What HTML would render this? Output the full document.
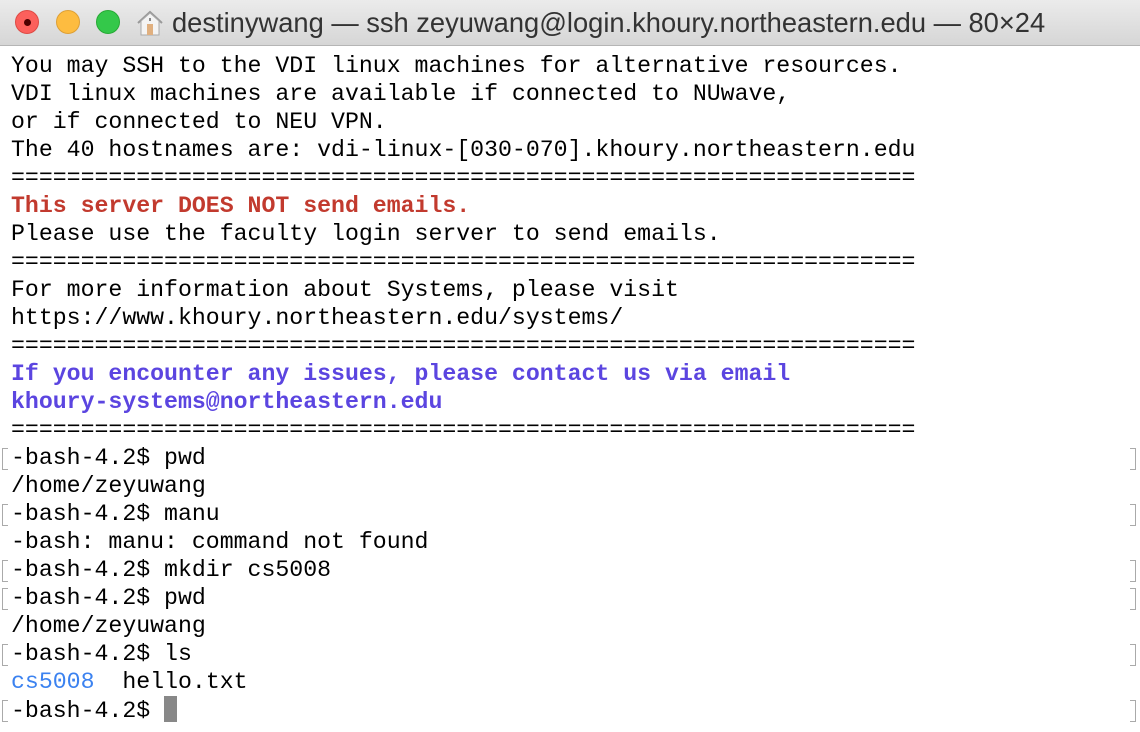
<!DOCTYPE html>
<html><head><meta charset="utf-8"><style>
body{margin:0;width:1140px;height:732px;background:#fff;overflow:hidden;position:relative;font-family:"Liberation Mono",monospace}
.tb{position:absolute;left:0;top:0;width:1140px;height:45px;background:linear-gradient(#ebebeb,#d6d6d6);border-bottom:1px solid #b5b5b5}
.dot{position:absolute;top:10px;width:23px;height:23px;border-radius:50%}
.title{position:absolute;left:172px;top:7px;font:27.3px "Liberation Sans",sans-serif;color:#333;white-space:nowrap}
pre{position:absolute;left:11px;top:52px;margin:0;font:23.2px/28px "Liberation Mono",monospace;color:#000}
.r{color:#c23a2e;font-weight:bold}.b{color:#5b45e0;font-weight:bold}.c{color:#3b82f0}
.br{position:absolute;width:5px;height:20px;border:1.5px solid #aaa;}
.bl{left:2px;border-right:none}.brr{left:1130px;border-left:none}
.cur{display:inline-block;width:13px;height:26px;background:#888;vertical-align:-5px}
</style></head><body>
<div class="tb">
<div class="dot" style="left:15px;background:#fc605c;border:1px solid #de4a44;width:22px;height:22px"><div style="position:absolute;left:8px;top:8px;width:7px;height:7px;border-radius:50%;background:#4d0000"></div></div>
<div class="dot" style="left:56px;background:#fdbc40;border:1px solid #dea035;width:22px;height:22px"></div>
<div class="dot" style="left:96px;background:#34c84a;border:1px solid #27aa35;width:22px;height:22px"></div>
<svg style="position:absolute;left:136px;top:10px" width="28" height="26" viewBox="0 0 28 26"><path d="M2 13 L14 2 L26 13" fill="none" stroke="#999" stroke-width="2"/><path d="M5 11 V25 H23 V11 L14 3Z" fill="#f4f4f4" stroke="#aaa"/><rect x="11" y="14" width="6" height="11" fill="#e0b080"/><rect x="13" y="8" width="2" height="3" fill="#888"/></svg>
<div class="title">destinywang — ssh zeyuwang@login.khoury.northeastern.edu — 80×24</div>
</div>
<pre>You may SSH to the VDI linux machines for alternative resources.
VDI linux machines are available if connected to NUwave,
or if connected to NEU VPN.
The 40 hostnames are: vdi-linux-[030-070].khoury.northeastern.edu
=================================================================
<span class="r">This server DOES NOT send emails.</span>
Please use the faculty login server to send emails.
=================================================================
For more information about Systems, please visit
https://www.khoury.northeastern.edu/systems/
=================================================================
<span class="b">If you encounter any issues, please contact us via email</span>
<span class="b">khoury-systems@northeastern.edu</span>
=================================================================
-bash-4.2$ pwd
/home/zeyuwang
-bash-4.2$ manu
-bash: manu: command not found
-bash-4.2$ mkdir cs5008
-bash-4.2$ pwd
/home/zeyuwang
-bash-4.2$ ls
<span class="c">cs5008</span>  hello.txt
-bash-4.2$ <span class="cur"></span></pre>
<div class="br bl" style="top:448px"></div><div class="br brr" style="top:448px"></div>
<div class="br bl" style="top:504px"></div><div class="br brr" style="top:504px"></div>
<div class="br bl" style="top:560px"></div><div class="br brr" style="top:560px"></div>
<div class="br bl" style="top:588px"></div><div class="br brr" style="top:588px"></div>
<div class="br bl" style="top:644px"></div><div class="br brr" style="top:644px"></div>
<div class="br bl" style="top:700px"></div><div class="br brr" style="top:700px"></div>
</body></html>
